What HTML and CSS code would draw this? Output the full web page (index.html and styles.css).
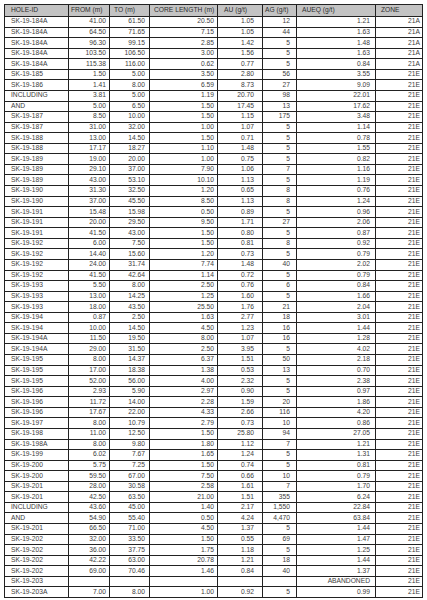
FILE: index.html
```html
<!DOCTYPE html>
<html lang="en">
<head>
<meta charset="utf-8">
<title>Drill Results</title>
<link rel="stylesheet" href="styles.css">
</head>
<body>
<table class="results">
<colgroup>
<col class="w-hole"><col class="w-from"><col class="w-to"><col class="w-core"><col class="w-au"><col class="w-ag"><col class="w-aueq"><col class="w-zone">
</colgroup>
<thead>
<tr class="head"><th>HOLE-ID</th><th>FROM (m)</th><th>TO (m)</th><th>CORE LENGTH (m)</th><th>AU (g/t)</th><th>AG (g/t)</th><th>AUEQ (g/t)</th><th>ZONE</th></tr>
</thead>
<tbody>
<tr><td>SK-19-184A</td><td>41.00</td><td>61.50</td><td>20.50</td><td>1.05</td><td>12</td><td>1.21</td><td>21A</td></tr>
<tr><td>SK-19-184A</td><td>64.50</td><td>71.65</td><td>7.15</td><td>1.05</td><td>44</td><td>1.63</td><td>21A</td></tr>
<tr><td>SK-19-184A</td><td>96.30</td><td>99.15</td><td>2.85</td><td>1.42</td><td>5</td><td>1.48</td><td>21A</td></tr>
<tr><td>SK-19-184A</td><td>103.50</td><td>106.50</td><td>3.00</td><td>1.56</td><td>5</td><td>1.63</td><td>21A</td></tr>
<tr><td>SK-19-184A</td><td>115.38</td><td>116.00</td><td>0.62</td><td>0.77</td><td>5</td><td>0.84</td><td>21A</td></tr>
<tr><td>SK-19-185</td><td>1.50</td><td>5.00</td><td>3.50</td><td>2.80</td><td>56</td><td>3.55</td><td>21E</td></tr>
<tr><td>SK-19-186</td><td>1.41</td><td>8.00</td><td>6.59</td><td>8.73</td><td>27</td><td>9.09</td><td>21E</td></tr>
<tr><td>INCLUDING</td><td>3.81</td><td>5.00</td><td>1.19</td><td>20.70</td><td>98</td><td>22.01</td><td>21E</td></tr>
<tr><td>AND</td><td>5.00</td><td>6.50</td><td>1.50</td><td>17.45</td><td>13</td><td>17.62</td><td>21E</td></tr>
<tr><td>SK-19-187</td><td>8.50</td><td>10.00</td><td>1.50</td><td>1.15</td><td>175</td><td>3.48</td><td>21E</td></tr>
<tr><td>SK-19-187</td><td>31.00</td><td>32.00</td><td>1.00</td><td>1.07</td><td>5</td><td>1.14</td><td>21E</td></tr>
<tr><td>SK-19-188</td><td>13.00</td><td>14.50</td><td>1.50</td><td>0.71</td><td>5</td><td>0.78</td><td>21E</td></tr>
<tr><td>SK-19-188</td><td>17.17</td><td>18.27</td><td>1.10</td><td>1.48</td><td>5</td><td>1.55</td><td>21E</td></tr>
<tr><td>SK-19-189</td><td>19.00</td><td>20.00</td><td>1.00</td><td>0.75</td><td>5</td><td>0.82</td><td>21E</td></tr>
<tr><td>SK-19-189</td><td>29.10</td><td>37.00</td><td>7.90</td><td>1.06</td><td>7</td><td>1.16</td><td>21E</td></tr>
<tr><td>SK-19-189</td><td>43.00</td><td>53.10</td><td>10.10</td><td>1.13</td><td>5</td><td>1.19</td><td>21E</td></tr>
<tr><td>SK-19-190</td><td>31.30</td><td>32.50</td><td>1.20</td><td>0.65</td><td>8</td><td>0.76</td><td>21E</td></tr>
<tr><td>SK-19-190</td><td>37.00</td><td>45.50</td><td>8.50</td><td>1.13</td><td>8</td><td>1.24</td><td>21E</td></tr>
<tr><td>SK-19-191</td><td>15.48</td><td>15.98</td><td>0.50</td><td>0.89</td><td>5</td><td>0.96</td><td>21E</td></tr>
<tr><td>SK-19-191</td><td>20.00</td><td>29.50</td><td>9.50</td><td>1.71</td><td>27</td><td>2.06</td><td>21E</td></tr>
<tr><td>SK-19-191</td><td>41.50</td><td>43.00</td><td>1.50</td><td>0.80</td><td>5</td><td>0.87</td><td>21E</td></tr>
<tr><td>SK-19-192</td><td>6.00</td><td>7.50</td><td>1.50</td><td>0.81</td><td>8</td><td>0.92</td><td>21E</td></tr>
<tr><td>SK-19-192</td><td>14.40</td><td>15.60</td><td>1.20</td><td>0.73</td><td>5</td><td>0.79</td><td>21E</td></tr>
<tr><td>SK-19-192</td><td>24.00</td><td>31.74</td><td>7.74</td><td>1.48</td><td>40</td><td>2.02</td><td>21E</td></tr>
<tr><td>SK-19-192</td><td>41.50</td><td>42.64</td><td>1.14</td><td>0.72</td><td>5</td><td>0.79</td><td>21E</td></tr>
<tr><td>SK-19-193</td><td>5.50</td><td>8.00</td><td>2.50</td><td>0.76</td><td>6</td><td>0.84</td><td>21E</td></tr>
<tr><td>SK-19-193</td><td>13.00</td><td>14.25</td><td>1.25</td><td>1.60</td><td>5</td><td>1.66</td><td>21E</td></tr>
<tr><td>SK-19-193</td><td>18.00</td><td>43.50</td><td>25.50</td><td>1.76</td><td>21</td><td>2.04</td><td>21E</td></tr>
<tr><td>SK-19-194</td><td>0.87</td><td>2.50</td><td>1.63</td><td>2.77</td><td>18</td><td>3.01</td><td>21E</td></tr>
<tr><td>SK-19-194</td><td>10.00</td><td>14.50</td><td>4.50</td><td>1.23</td><td>16</td><td>1.44</td><td>21E</td></tr>
<tr><td>SK-19-194A</td><td>11.50</td><td>19.50</td><td>8.00</td><td>1.07</td><td>16</td><td>1.28</td><td>21E</td></tr>
<tr><td>SK-19-194A</td><td>29.00</td><td>31.50</td><td>2.50</td><td>3.95</td><td>5</td><td>4.02</td><td>21E</td></tr>
<tr><td>SK-19-195</td><td>8.00</td><td>14.37</td><td>6.37</td><td>1.51</td><td>50</td><td>2.18</td><td>21E</td></tr>
<tr><td>SK-19-195</td><td>17.00</td><td>18.38</td><td>1.38</td><td>0.53</td><td>13</td><td>0.70</td><td>21E</td></tr>
<tr><td>SK-19-195</td><td>52.00</td><td>56.00</td><td>4.00</td><td>2.32</td><td>5</td><td>2.38</td><td>21E</td></tr>
<tr><td>SK-19-196</td><td>2.93</td><td>5.90</td><td>2.97</td><td>0.90</td><td>5</td><td>0.97</td><td>21E</td></tr>
<tr><td>SK-19-196</td><td>11.72</td><td>14.00</td><td>2.28</td><td>1.59</td><td>20</td><td>1.86</td><td>21E</td></tr>
<tr><td>SK-19-196</td><td>17.67</td><td>22.00</td><td>4.33</td><td>2.66</td><td>116</td><td>4.20</td><td>21E</td></tr>
<tr><td>SK-19-197</td><td>8.00</td><td>10.79</td><td>2.79</td><td>0.73</td><td>10</td><td>0.86</td><td>21E</td></tr>
<tr><td>SK-19-198</td><td>11.00</td><td>12.50</td><td>1.50</td><td>25.80</td><td>94</td><td>27.05</td><td>21E</td></tr>
<tr><td>SK-19-198A</td><td>8.00</td><td>9.80</td><td>1.80</td><td>1.12</td><td>7</td><td>1.21</td><td>21E</td></tr>
<tr><td>SK-19-199</td><td>6.02</td><td>7.67</td><td>1.65</td><td>1.24</td><td>5</td><td>1.31</td><td>21E</td></tr>
<tr><td>SK-19-200</td><td>5.75</td><td>7.25</td><td>1.50</td><td>0.74</td><td>5</td><td>0.81</td><td>21E</td></tr>
<tr><td>SK-19-200</td><td>59.50</td><td>67.00</td><td>7.50</td><td>0.66</td><td>10</td><td>0.79</td><td>21E</td></tr>
<tr><td>SK-19-201</td><td>28.00</td><td>30.58</td><td>2.58</td><td>1.61</td><td>7</td><td>1.70</td><td>21E</td></tr>
<tr><td>SK-19-201</td><td>42.50</td><td>63.50</td><td>21.00</td><td>1.51</td><td>355</td><td>6.24</td><td>21E</td></tr>
<tr><td>INCLUDING</td><td>43.60</td><td>45.00</td><td>1.40</td><td>2.17</td><td>1,550</td><td>22.84</td><td>21E</td></tr>
<tr><td>AND</td><td>54.90</td><td>55.40</td><td>0.50</td><td>4.24</td><td>4,470</td><td>63.84</td><td>21E</td></tr>
<tr><td>SK-19-201</td><td>66.50</td><td>71.00</td><td>4.50</td><td>1.37</td><td>5</td><td>1.44</td><td>21E</td></tr>
<tr><td>SK-19-202</td><td>32.00</td><td>33.50</td><td>1.50</td><td>0.55</td><td>69</td><td>1.47</td><td>21E</td></tr>
<tr><td>SK-19-202</td><td>36.00</td><td>37.75</td><td>1.75</td><td>1.18</td><td>5</td><td>1.25</td><td>21E</td></tr>
<tr><td>SK-19-202</td><td>42.22</td><td>63.00</td><td>20.78</td><td>1.21</td><td>18</td><td>1.44</td><td>21E</td></tr>
<tr><td>SK-19-202</td><td>69.00</td><td>70.46</td><td>1.46</td><td>0.84</td><td>40</td><td>1.37</td><td>21E</td></tr>
<tr><td>SK-19-203</td><td></td><td></td><td></td><td></td><td></td><td>ABANDONED</td><td>21E</td></tr>
<tr><td>SK-19-203A</td><td>7.00</td><td>8.00</td><td>1.00</td><td>0.92</td><td>5</td><td>0.99</td><td>21E</td></tr>
</tbody>
</table>
</body>
</html>
```

FILE: styles.css
```css
html, body {
  margin: 0;
  padding: 0;
  background: #ffffff;
}
body {
  padding: 4px 0 0 4px;
  font-family: "Liberation Sans", Arial, sans-serif;
}
.results {
  border-collapse: collapse;
  table-layout: fixed;
  width: 419px;
  font-size: 6.7px;
  color: #3c3c3c;
}
.w-hole { width: 64px; }
.w-from { width: 41px; }
.w-to { width: 40px; }
.w-core { width: 68px; }
.w-au { width: 45px; }
.w-ag { width: 34px; }
.w-aueq { width: 79px; }
.w-zone { width: 47px; }

.results th,
.results td {
  border: 1px solid #222222;
  padding: 0;
  line-height: 1;
  white-space: nowrap;
  overflow: hidden;
  vertical-align: middle;
}
.results tr { height: 10.57px; }
.results .head { height: 12px; }
.results th {
  background: #c3c3c3;
  color: #2e2e2e;
  font-weight: normal;
  text-align: left;
}
.results th:nth-child(1) { padding-left: 6px; }
.results th:nth-child(2) { padding-left: 2px; }
.results th:nth-child(3) { padding-left: 4px; }
.results th:nth-child(4) { padding-left: 4px; }
.results th:nth-child(5) { padding-left: 6px; }
.results th:nth-child(6) { padding-left: 2px; }
.results th:nth-child(7) { padding-left: 5px; }
.results th:nth-child(8) { padding-left: 5px; }

.results td { text-align: right; }
.results td:nth-child(1) { text-align: left; padding-left: 6px; }
.results td:nth-child(2) { padding-right: 3px; }
.results td:nth-child(3) { padding-right: 4px; }
.results td:nth-child(4) { padding-right: 3px; }
.results td:nth-child(5) { padding-right: 8px; }
.results td:nth-child(6) { padding-right: 6px; }
.results td:nth-child(7) { padding-right: 5px; }
.results td:nth-child(8) { padding-right: 2px; }
```
